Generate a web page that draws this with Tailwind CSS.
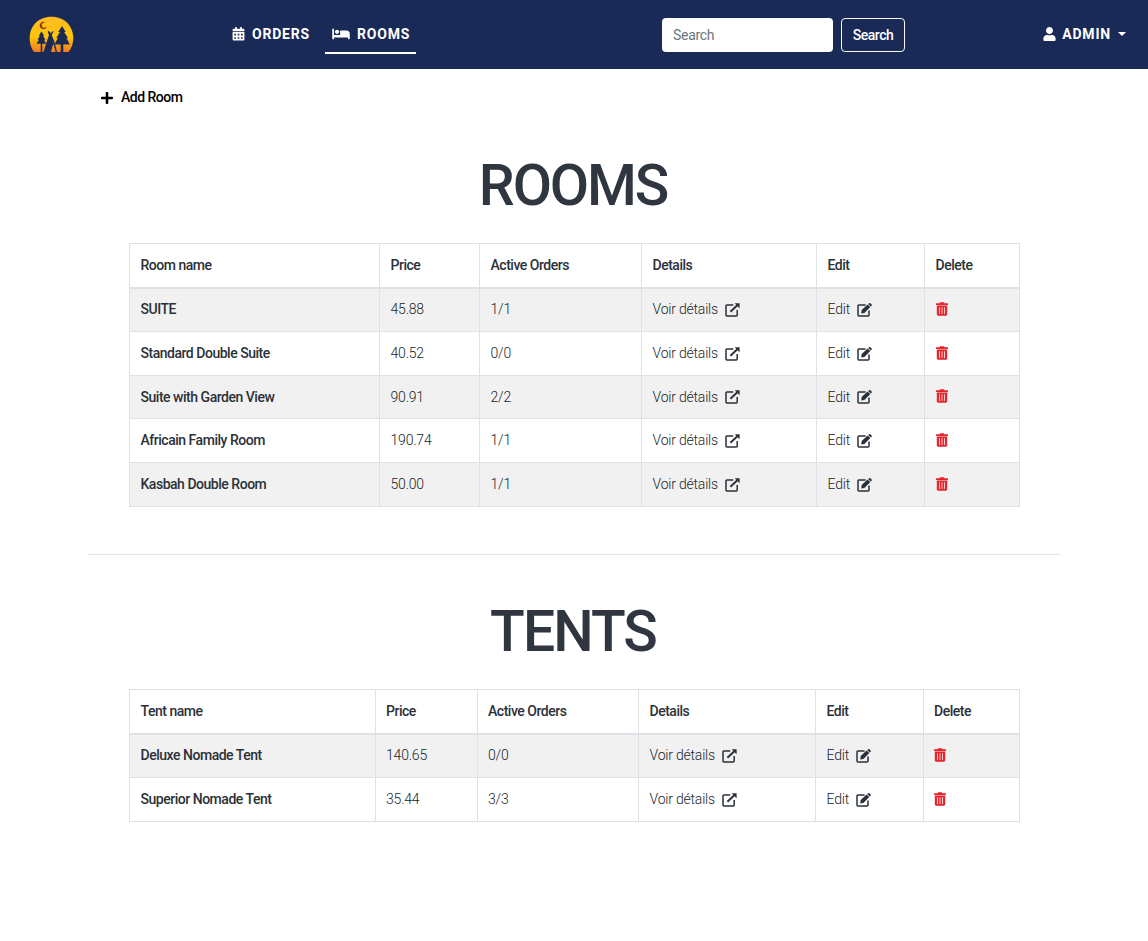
<!DOCTYPE html>
<html lang="en">
<head>
<meta charset="utf-8">
<title>Rooms</title>
<script src="https://cdn.jsdelivr.net/npm/@tailwindcss/browser@4"></script>
</head>
<body class="bg-white font-['Roboto',sans-serif] text-[14px] text-[#2b3138]">
<svg class="hidden">
  <symbol id="ext" viewBox="0 0 15 14"><path d="M8.300 2H1.900a.9.900 0 0 0-.9.900v9.200c0 .5.400.9.900.9h9.400c.5 0 .9-.4.900-.9V7" fill="none" stroke="currentColor" stroke-width="1.500"/><path d="M5.400 8.800 12.600 2" stroke="currentColor" stroke-width="1.900"/><path d="M9.700.300h4.900v4.900z" fill="currentColor"/></symbol>
  <symbol id="edit" viewBox="0 0 15 14"><path d="M8.600 2H1.900a.9.900 0 0 0-.9.900v9.200c0 .5.400.9.900.9h9.200c.5 0 .9-.4.900-.9V7.500" fill="none" stroke="currentColor" stroke-width="1.500"/><path d="m4.200 10.400.5-3.300L10.600 1.500l2.700 2.600-5.900 5.800zM11.200 1l.9-.7c.4-.4.8-.4 1.200 0l1.300 1.200c.4.400.4.800 0 1.200l-.8.900z" fill="currentColor"/></symbol>
  <symbol id="bin" viewBox="0 0 12 14"><path d="M.5 1.300h3L4.200.200h3.600l.7 1.100h3c.3 0 .5.200.5.500v1.200H0V1.800c0-.3.200-.5.5-.5z" fill="currentColor"/><path fill-rule="evenodd" d="M.8 3.500h10.400v8.800c0 .8-.6 1.400-1.400 1.400H2.200c-.8 0-1.400-.6-1.400-1.400zm2.200 1.700v6.700h.8V5.200zm2.600 0v6.700h.8V5.200zm2.600 0v6.700H9V5.200z" fill="currentColor"/></symbol>
</svg>
<header class="flex h-[69px] bg-[#1a2a56] text-white">
  <a class="ml-[29px] mt-[15px] block size-[45px]">
    <svg viewBox="0 0 45 45" class="size-full">
      <defs><linearGradient id="sun" x1="0" y1="0" x2="0" y2="1"><stop offset="0" stop-color="#fdb924"/><stop offset=".55" stop-color="#ffc60b"/><stop offset="1" stop-color="#f47b20"/></linearGradient></defs>
      <path d="M5 37C-1 29-1 16 6 8.500 14-.5 31-.5 39 8.500 46 17 46 29 39.500 37z" fill="url(#sun)"/>
      <path d="M15.500 7.300a3.400 3.400 0 1 0 1.800 5 2.900 2.900 0 1 1-1.800-5z" fill="#8a2b16" stroke="#8a2b16" stroke-width=".5"/>
      <path d="m12.500 16.500 2.800 4.200h-1.300l2.500 4h-1.400l2.200 4h-4v8.300h-1.600v-8.300H7.500l2.500-4H8.500l2.400-4H9.700zM33 11l3.800 6h-1.600l3.800 6h-1.500l3.300 6.500h-6.500V37h-2.600v-7.500h-6.200l3.300-6.500h-1.400l3.500-6h-1.700z" fill="#1a2a56"/>
      <path d="m20 16 1.700 2.200 2.200-2.200.7.600-1.900 3.300 2.800 7.100-2 4-1.500 6h-7.500l2.500-8 3-9-1.400-3.500z" fill="#1a2a56"/>
      <path d="M25.500 27 28 37h-1.300l-2.300-8z" fill="#1a2a56"/>
    </svg>
  </a>
  <nav class="ml-[150px] flex gap-[9px] pt-[15px] text-[14px] font-bold tracking-[0.800px]">
    <a class="flex h-[39px] items-start gap-[7px] px-[8px] leading-[38px]">
      <svg class="mt-[12px] h-[13.500px] w-[13px]" viewBox="0 0 448 512" fill="currentColor"><path fill-rule="evenodd" d="M0 464c0 26.500 21.500 48 48 48h352c26.500 0 48-21.500 48-48V192H0zM64 256h64v64H64zm128 0h64v64h-64zm128 0h64v64h-64zM64 384h64v64H64zm128 0h64v64h-64zm128 0h64v64h-64zM400 64h-48V12c0-6.600-5.400-12-12-12h-40c-6.600 0-12 5.400-12 12v52H160V12c0-6.600-5.400-12-12-12h-40c-6.600 0-12 5.400-12 12v52H48C21.500 64 0 85.500 0 112v48h448v-48c0-26.500-21.500-48-48-48z"/></svg>
      <span class="w-[57px]">ORDERS</span>
    </a>
    <a class="-ml-px flex h-[39px] w-[91px] items-start gap-[7px] border-b-2 border-white px-[7px] leading-[38px]">
      <svg class="mt-[12px] h-[14px] w-[18px] shrink-0" viewBox="0 0 640 512" fill="currentColor"><path d="M176 256c44.110 0 80-35.890 80-80s-35.890-80-80-80-80 35.890-80 80 35.890 80 80 80zm352-128H304c-8.840 0-16 7.160-16 16v144H64V80c0-8.840-7.160-16-16-16H16C7.160 64 0 71.160 0 80v352c0 8.840 7.160 16 16 16h32c8.840 0 16-7.160 16-16v-48h512v48c0 8.840 7.160 16 16 16h32c8.840 0 16-7.160 16-16V240c0-61.860-50.140-112-112-112z"/></svg>
      <span>ROOMS</span>
    </a>
  </nav>
  <form class="ml-[246px] flex gap-[8px] pt-[18px]">
    <input class="h-[34px] w-[171px] rounded-[4px] bg-white px-[11px] tracking-[-0.300px] placeholder:text-[#6c757d]" placeholder="Search">
    <button type="button" class="h-[34px] w-[64px] rounded-[4px] border border-[#f8f9fa] font-medium tracking-[-0.450px]">Search</button>
  </form>
  <div class="ml-auto mr-[22px] flex h-[69px] items-start pt-[15px] text-[14px] font-bold leading-[39px] tracking-[0.800px]">
    <svg class="mt-[12px] mr-[6px] h-[14px] w-[13px]" viewBox="0 0 448 512" fill="currentColor"><path d="M224 256c70.700 0 128-57.300 128-128S294.700 0 224 0 96 57.300 96 128s57.300 128 128 128zm89.600 32h-16.700c-22.200 10.200-46.900 16-72.900 16s-50.600-5.800-72.900-16h-16.700C60.200 288 0 348.200 0 422.400V464c0 26.500 21.500 48 48 48h352c26.500 0 48-21.500 48-48v-41.600c0-74.200-60.200-134.400-134.400-134.400z"/></svg>
    <span>ADMIN</span>
    <svg class="ml-[7px] mt-[17px] h-[4px] w-[8px]" viewBox="0 0 8 4"><path d="M0 0h8L4 4z" fill="currentColor"/></svg>
  </div>
</header>
<main>
  <a class="ml-[101px] mt-[18px] flex h-[21px] items-center font-medium tracking-[-0.500px] text-black"><svg class="mr-[8px] h-[14px] w-[12px]" viewBox="0 0 448 512" fill="currentColor"><path d="M416 208H272V64c0-17.670-14.330-32-32-32h-32c-17.670 0-32 14.330-32 32v144H32c-17.670 0-32 14.330-32 32v32c0 17.670 14.330 32 32 32h144v144c0 17.670 14.330 32 32 32h32c17.670 0 32-14.330 32-32V304h144c17.670 0 32-14.330 32-32v-32c0-17.670-14.330-32-32-32z"/></svg><span>Add Room</span></a>
  <h1 class="mr-[2px] mt-[44px] h-[68px] text-center text-[57px] font-medium leading-[68px] tracking-[-2.100px] text-[#2f3640]">ROOMS</h1>
  <table id="rooms" class="ml-[129px] mt-[23px] w-[891px] table-fixed border-collapse text-left">
    <colgroup><col class="w-[250px]"><col class="w-[100px]"><col class="w-[162px]"><col class="w-[175px]"><col class="w-[108px]"><col class="w-[95px]"></colgroup>
    <thead></thead><tbody></tbody>
  </table>
  <hr class="ml-[87px] mt-[47px] w-[974px] border-t border-[#e5e5e5]">
  <h1 class="mr-[2px] mt-[43px] h-[68px] text-center text-[57px] font-medium leading-[68px] tracking-[-1.900px] text-[#2f3640]">TENTS</h1>
  <table id="tents" class="ml-[129px] mt-[23px] w-[891px] table-fixed border-collapse text-left">
    <colgroup><col class="w-[245.500px]"><col class="w-[102px]"><col class="w-[161.500px]"><col class="w-[177px]"><col class="w-[107.500px]"><col class="w-[96.500px]"></colgroup>
    <thead></thead><tbody></tbody>
  </table>
</main>
<script>
const th = 'h-[44px] border border-[#dee2e6] border-b-2 pl-[10.500px] pr-[10px] py-0 font-medium tracking-[-0.480px]';
const td = 'border border-[#dee2e6] pl-[10.500px] pr-[10px] py-0 font-light tracking-[-0.200px] text-[#212529]';
function fill(id, first, rows) {
  const t = document.getElementById(id);
  t.tHead.innerHTML = '<tr>' + [first, 'Price', 'Active Orders', 'Details', 'Edit', 'Delete'].map(h => `<th class="${th}">${h}</th>`).join('') + '</tr>';
  t.tBodies[0].innerHTML = rows.map((r, i) => `<tr class="${i === 2 ? 'h-[43px]' : 'h-[44px]'} odd:bg-[#f1f1f1]">
    <th class="border border-[#dee2e6] pl-[10.500px] pr-[10px] py-0 font-medium tracking-[-0.480px]">${r[0]}</th>
    <td class="${td}">${r[1]}</td><td class="${td}">${r[2]}</td>
    <td class="${td}"><span class="flex items-center gap-[7px]">Voir détails<svg class="h-[14px] w-[15px] text-[#2b3138]"><use href="#ext"/></svg></span></td>
    <td class="${td}"><span class="flex items-center gap-[7px]">Edit<svg class="h-[14px] w-[15px] text-[#2b3138]"><use href="#edit"/></svg></span></td>
    <td class="${td}"><svg class="mb-[2px] h-[14px] w-[12px] text-[#e7242b]"><use href="#bin"/></svg></td></tr>`).join('');
}
fill('rooms', 'Room name', [['SUITE','45.88','1/1'],['Standard Double Suite','40.52','0/0'],['Suite with Garden View','90.91','2/2'],['Africain Family Room','190.74','1/1'],['Kasbah Double Room','50.00','1/1']]);
fill('tents', 'Tent name', [['Deluxe Nomade Tent','140.65','0/0'],['Superior Nomade Tent','35.44','3/3']]);
</script>
</body>
</html>
